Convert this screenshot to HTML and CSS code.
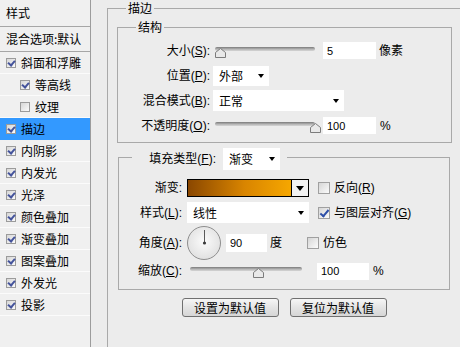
FILE: index.html
```html
<!DOCTYPE html>
<html lang="zh-CN">
<head>
    <meta charset="UTF-8">
    <meta name="viewport" content="width=device-width, initial-scale=1.0">
    <title>图层样式 - 描边</title>
    <link rel="stylesheet" href="styles.css">
</head>
<body>
    <div class="dialog">
        <ul class="style-list">
            <li class="list-head">样式</li>
            <li class="list-blend">混合选项:默认</li>
            <li class="list-item"><span class="cb on"></span>斜面和浮雕</li>
            <li class="list-item sub"><span class="cb on"></span>等高线</li>
            <li class="list-item sub"><span class="cb"></span>纹理</li>
            <li class="list-item active"><span class="cb on"></span>描边</li>
            <li class="list-item"><span class="cb on"></span>内阴影</li>
            <li class="list-item"><span class="cb on"></span>内发光</li>
            <li class="list-item"><span class="cb on"></span>光泽</li>
            <li class="list-item"><span class="cb on"></span>颜色叠加</li>
            <li class="list-item"><span class="cb on"></span>渐变叠加</li>
            <li class="list-item"><span class="cb on"></span>图案叠加</li>
            <li class="list-item"><span class="cb on"></span>外发光</li>
            <li class="list-item"><span class="cb on"></span>投影</li>
        </ul>

        <div class="main">
            <fieldset class="group outer">
                <legend>描边</legend>

                <fieldset class="group structure">
                    <legend>结构</legend>

                    <div class="row">
                        <span class="lbl">大小(<u>S</u>):</span>
                        <div class="slider slider-struct">
                            <div class="track"></div>
                            <svg class="thumb" style="left: 0px" width="11" height="10" viewBox="0 0 11 10"><path d="M0.5 9.5V4.5L5.5 0.5L10.5 4.5V9.5Z" fill="#e9e9e9" stroke="#7c7c7c"/></svg>
                        </div>
                        <input class="num num-struct" type="text" value="5">
                        <span class="unit">像素</span>
                    </div>

                    <div class="row">
                        <span class="lbl">位置(<u>P</u>):</span>
                        <div class="select sel-position">外部<span class="arrow"></span></div>
                    </div>

                    <div class="row">
                        <span class="lbl">混合模式(<u>B</u>):</span>
                        <div class="select sel-blend">正常<span class="arrow"></span></div>
                    </div>

                    <div class="row">
                        <span class="lbl">不透明度(<u>O</u>):</span>
                        <div class="slider slider-struct">
                            <div class="track"></div>
                            <svg class="thumb" style="left: 95px" width="11" height="10" viewBox="0 0 11 10"><path d="M0.5 9.5V4.5L5.5 0.5L10.5 4.5V9.5Z" fill="#e9e9e9" stroke="#7c7c7c"/></svg>
                        </div>
                        <input class="num num-struct" type="text" value="100">
                        <span class="unit pct">%</span>
                    </div>
                </fieldset>

                <fieldset class="group fill">
                    <legend>
                        <span class="legend-row">
                            <span class="lbl lbl-type">填充类型(<u>F</u>):</span>
                            <span class="select sel-type">渐变<span class="arrow"></span></span>
                        </span>
                    </legend>

                    <div class="frow frow-grad">
                        <span class="lbl lbl-fill">渐变:</span>
                        <div class="grad-box">
                            <div class="grad-fill"></div>
                            <div class="grad-btn"><span class="arrow big"></span></div>
                        </div>
                        <span class="cb cb-lg"></span>
                        <span class="check-text">反向(<u>R</u>)</span>
                    </div>

                    <div class="frow frow-style">
                        <span class="lbl lbl-fill">样式(<u>L</u>):</span>
                        <div class="select sel-style">线性<span class="arrow"></span></div>
                        <span class="cb cb-lg on"></span>
                        <span class="check-text">与图层对齐(<u>G</u>)</span>
                    </div>

                    <div class="frow frow-angle">
                        <span class="lbl lbl-fill">角度(<u>A</u>):</span>
                        <svg class="dial" width="34" height="34" viewBox="0 0 34 34">
                            <defs>
                                <radialGradient id="dialFace" cx="50%" cy="45%" r="60%">
                                    <stop offset="0" stop-color="#fbfbfb"/>
                                    <stop offset="1" stop-color="#dedede"/>
                                </radialGradient>
                            </defs>
                            <circle cx="17" cy="17" r="16.5" fill="url(#dialFace)" stroke="#8e8e8e"/>
                            <line x1="17.5" y1="17" x2="17.5" y2="4" stroke="#5a5a5a" stroke-width="1"/>
                            <circle cx="17.5" cy="17" r="1.6" fill="#3a3a3a"/>
                        </svg>
                        <input class="num num-angle" type="text" value="90">
                        <span class="unit">度</span>
                        <span class="cb cb-lg dither"></span>
                        <span class="check-text">仿色</span>
                    </div>

                    <div class="frow frow-scale">
                        <span class="lbl lbl-fill">缩放(<u>C</u>):</span>
                        <div class="slider slider-scale">
                            <div class="track"></div>
                            <svg class="thumb" style="left: 63px" width="11" height="10" viewBox="0 0 11 10"><path d="M0.5 9.5V4.5L5.5 0.5L10.5 4.5V9.5Z" fill="#e9e9e9" stroke="#7c7c7c"/></svg>
                        </div>
                        <input class="num num-scale" type="text" value="100">
                        <span class="unit pct">%</span>
                    </div>
                </fieldset>

                <div class="buttons">
                    <button type="button">设置为默认值</button>
                    <button type="button">复位为默认值</button>
                </div>
            </fieldset>
        </div>
    </div>
</body>
</html>
```

FILE: styles.css
```css
body {
    margin: 0;
    padding: 0;
    width: 460px;
    height: 347px;
    overflow: hidden;
    background-color: #ececec;
    color: #000;
    font-family: "Noto Sans CJK SC", sans-serif;
    font-size: 12px;
    line-height: 14px;
}

u {
    text-decoration: underline;
}

.dialog {
    display: flex;
    height: 347px;
}

/* left list of styles */

.style-list {
    list-style: none;
    margin: 0;
    padding: 0;
    width: 90px;
    flex: none;
    background-color: #f0f0f0;
    border-right: 1px solid #9c9c9c;
}

.list-head,
.list-blend,
.list-item {
    display: flex;
    align-items: center;
    padding-left: 6px;
    white-space: nowrap;
    overflow: hidden;
}

.list-head {
    height: 26px;
    border-bottom: 1px solid #a6a6a6;
}

.list-blend {
    height: 24px;
    border-bottom: 1px solid #a6a6a6;
}

.list-item {
    height: 21px;
    border-bottom: 1px solid #fbfbfb;
}

.list-item.sub {
    padding-left: 20px;
}

.list-item.active {
    background-color: #3399ff;
    border-bottom-color: #3399ff;
}

/* checkboxes */

.cb {
    position: relative;
    flex: none;
    box-sizing: border-box;
    width: 10px;
    height: 10px;
    margin-right: 5px;
    border: 1px solid #9b9b9b;
    background: linear-gradient(135deg, #d6d6d6, #fbfbfb);
}

.cb.on::after {
    content: "";
    position: absolute;
    left: 2px;
    top: 0;
    width: 3px;
    height: 5px;
    border: solid #44539b;
    border-width: 0 2px 2px 0;
    transform: rotate(40deg);
}

.cb-lg {
    width: 12px;
    height: 12px;
    margin-left: 9px;
    margin-right: 4px;
    border-color: #a0a0a0;
}

.cb-lg.on::after {
    left: 3px;
    top: 0;
    width: 3px;
    height: 7px;
    border-color: #2d4fa8;
}

.cb-lg.dither {
    margin-left: 25px;
}

/* group boxes */

.main {
    margin-left: 16px;
}

.group {
    margin: 0;
    padding: 0;
    min-width: 0;
    border: 1px solid #a9a9a9;
    box-sizing: border-box;
}

.group > legend {
    padding: 0 2px;
    line-height: 16px;
}

/* the outer box runs off the right and bottom of the window */
.outer {
    width: 353px;
    height: 347px;
    padding-left: 9px;
    border-right: none;
    border-bottom: none;
}

.outer > legend {
    margin-left: 9px;
}

.structure {
    width: 335px;
    margin-top: 3px;
    padding: 3px 0 4px;
}

.structure > legend {
    margin-left: 18px;
}

.fill {
    width: 332px;
    margin: 1px 0 0 1px;
    padding: 6px 0 8px;
}

.fill > legend {
    margin-left: 13px;
    padding: 4px 7px 0 0;
    line-height: 14px;
}

.legend-row {
    display: flex;
    align-items: center;
}

/* rows */

.row,
.frow {
    display: flex;
    align-items: center;
}

.row {
    height: 25px;
}

.lbl {
    flex: none;
    width: 92px;
    text-align: right;
    white-space: nowrap;
    font-family: "Liberation Sans", "Noto Sans CJK SC", sans-serif;
}

.lbl-type {
    width: 84px;
}

.lbl-fill {
    width: 63px;
    margin-right: 5px;
}

.frow-grad {
    height: 24px;
}

.frow-style {
    height: 25px;
}

.frow-angle {
    height: 36px;
}

.frow-scale {
    height: 20px;
}

.check-text,
.unit {
    font-family: "Liberation Sans", "Noto Sans CJK SC", sans-serif;
    white-space: nowrap;
}

.unit {
    margin-left: 3px;
}

.unit.pct {
    margin-left: 4px;
}

/* sliders */

.slider {
    position: relative;
    flex: none;
    height: 16px;
}

.slider-struct {
    width: 100px;
    margin-left: 5px;
}

.slider-scale {
    width: 112px;
    margin-left: 3px;
}

.track {
    margin-top: 4px;
    height: 4px;
    border-radius: 2px;
    background: linear-gradient(#7a7a7a, #b9b9b9 60%, #d6d6d6);
}

.thumb {
    position: absolute;
    top: 5px;
}

/* inputs and selects */

.num {
    flex: none;
    box-sizing: border-box;
    height: 17px;
    margin: 0;
    padding: 0 4px;
    border: none;
    background-color: #fff;
    color: #000;
    font-family: "Liberation Sans", sans-serif;
    font-size: 11px;
    outline: none;
}

.num-struct {
    width: 53px;
    margin-left: 8px;
}

.num-angle {
    width: 41px;
    height: 18px;
    margin-left: 5px;
}

.num-scale {
    width: 52px;
    margin-left: 15px;
}

.select {
    display: flex;
    align-items: center;
    flex: none;
    box-sizing: border-box;
    padding-left: 6px;
    background-color: #fff;
    white-space: nowrap;
}

.sel-position {
    width: 56px;
    height: 20px;
    margin-left: 3px;
}

.sel-blend {
    width: 131px;
    height: 21px;
    margin-left: 3px;
}

.sel-type {
    width: 57px;
    height: 22px;
    margin-left: 7px;
}

.sel-style {
    width: 122px;
    height: 21px;
}

.arrow {
    width: 0;
    height: 0;
    margin-left: auto;
    margin-right: 5px;
    border-left: 3.5px solid transparent;
    border-right: 3.5px solid transparent;
    border-top: 4px solid #000;
}

.arrow.big {
    margin: 0;
    border-left-width: 4px;
    border-right-width: 4px;
    border-top-width: 5px;
}

/* gradient picker */

.grad-box {
    display: flex;
    flex: none;
    box-sizing: border-box;
    width: 122px;
    height: 18px;
    border: 1px solid #000;
}

.grad-fill {
    flex: 1;
    background: linear-gradient(to right, #8a4700, #d98500 55%, #f6a700);
}

.grad-btn {
    display: flex;
    align-items: center;
    justify-content: center;
    width: 16px;
    border-left: 1px solid #000;
    background-color: #f2f2f2;
}

.dial {
    flex: none;
    display: block;
}

/* buttons */

.buttons {
    display: flex;
    justify-content: center;
    gap: 11px;
    width: 332px;
    margin: 8px 0 0 1px;
}

button {
    box-sizing: border-box;
    width: 97px;
    height: 19px;
    padding: 0;
    border: 1px solid #707070;
    border-radius: 3px;
    background: linear-gradient(#f6f6f6, #e4e4e4 50%, #d6d6d6);
    color: #000;
    font-family: "Noto Sans CJK SC", sans-serif;
    font-size: 12px;
    line-height: 15px;
}
```
